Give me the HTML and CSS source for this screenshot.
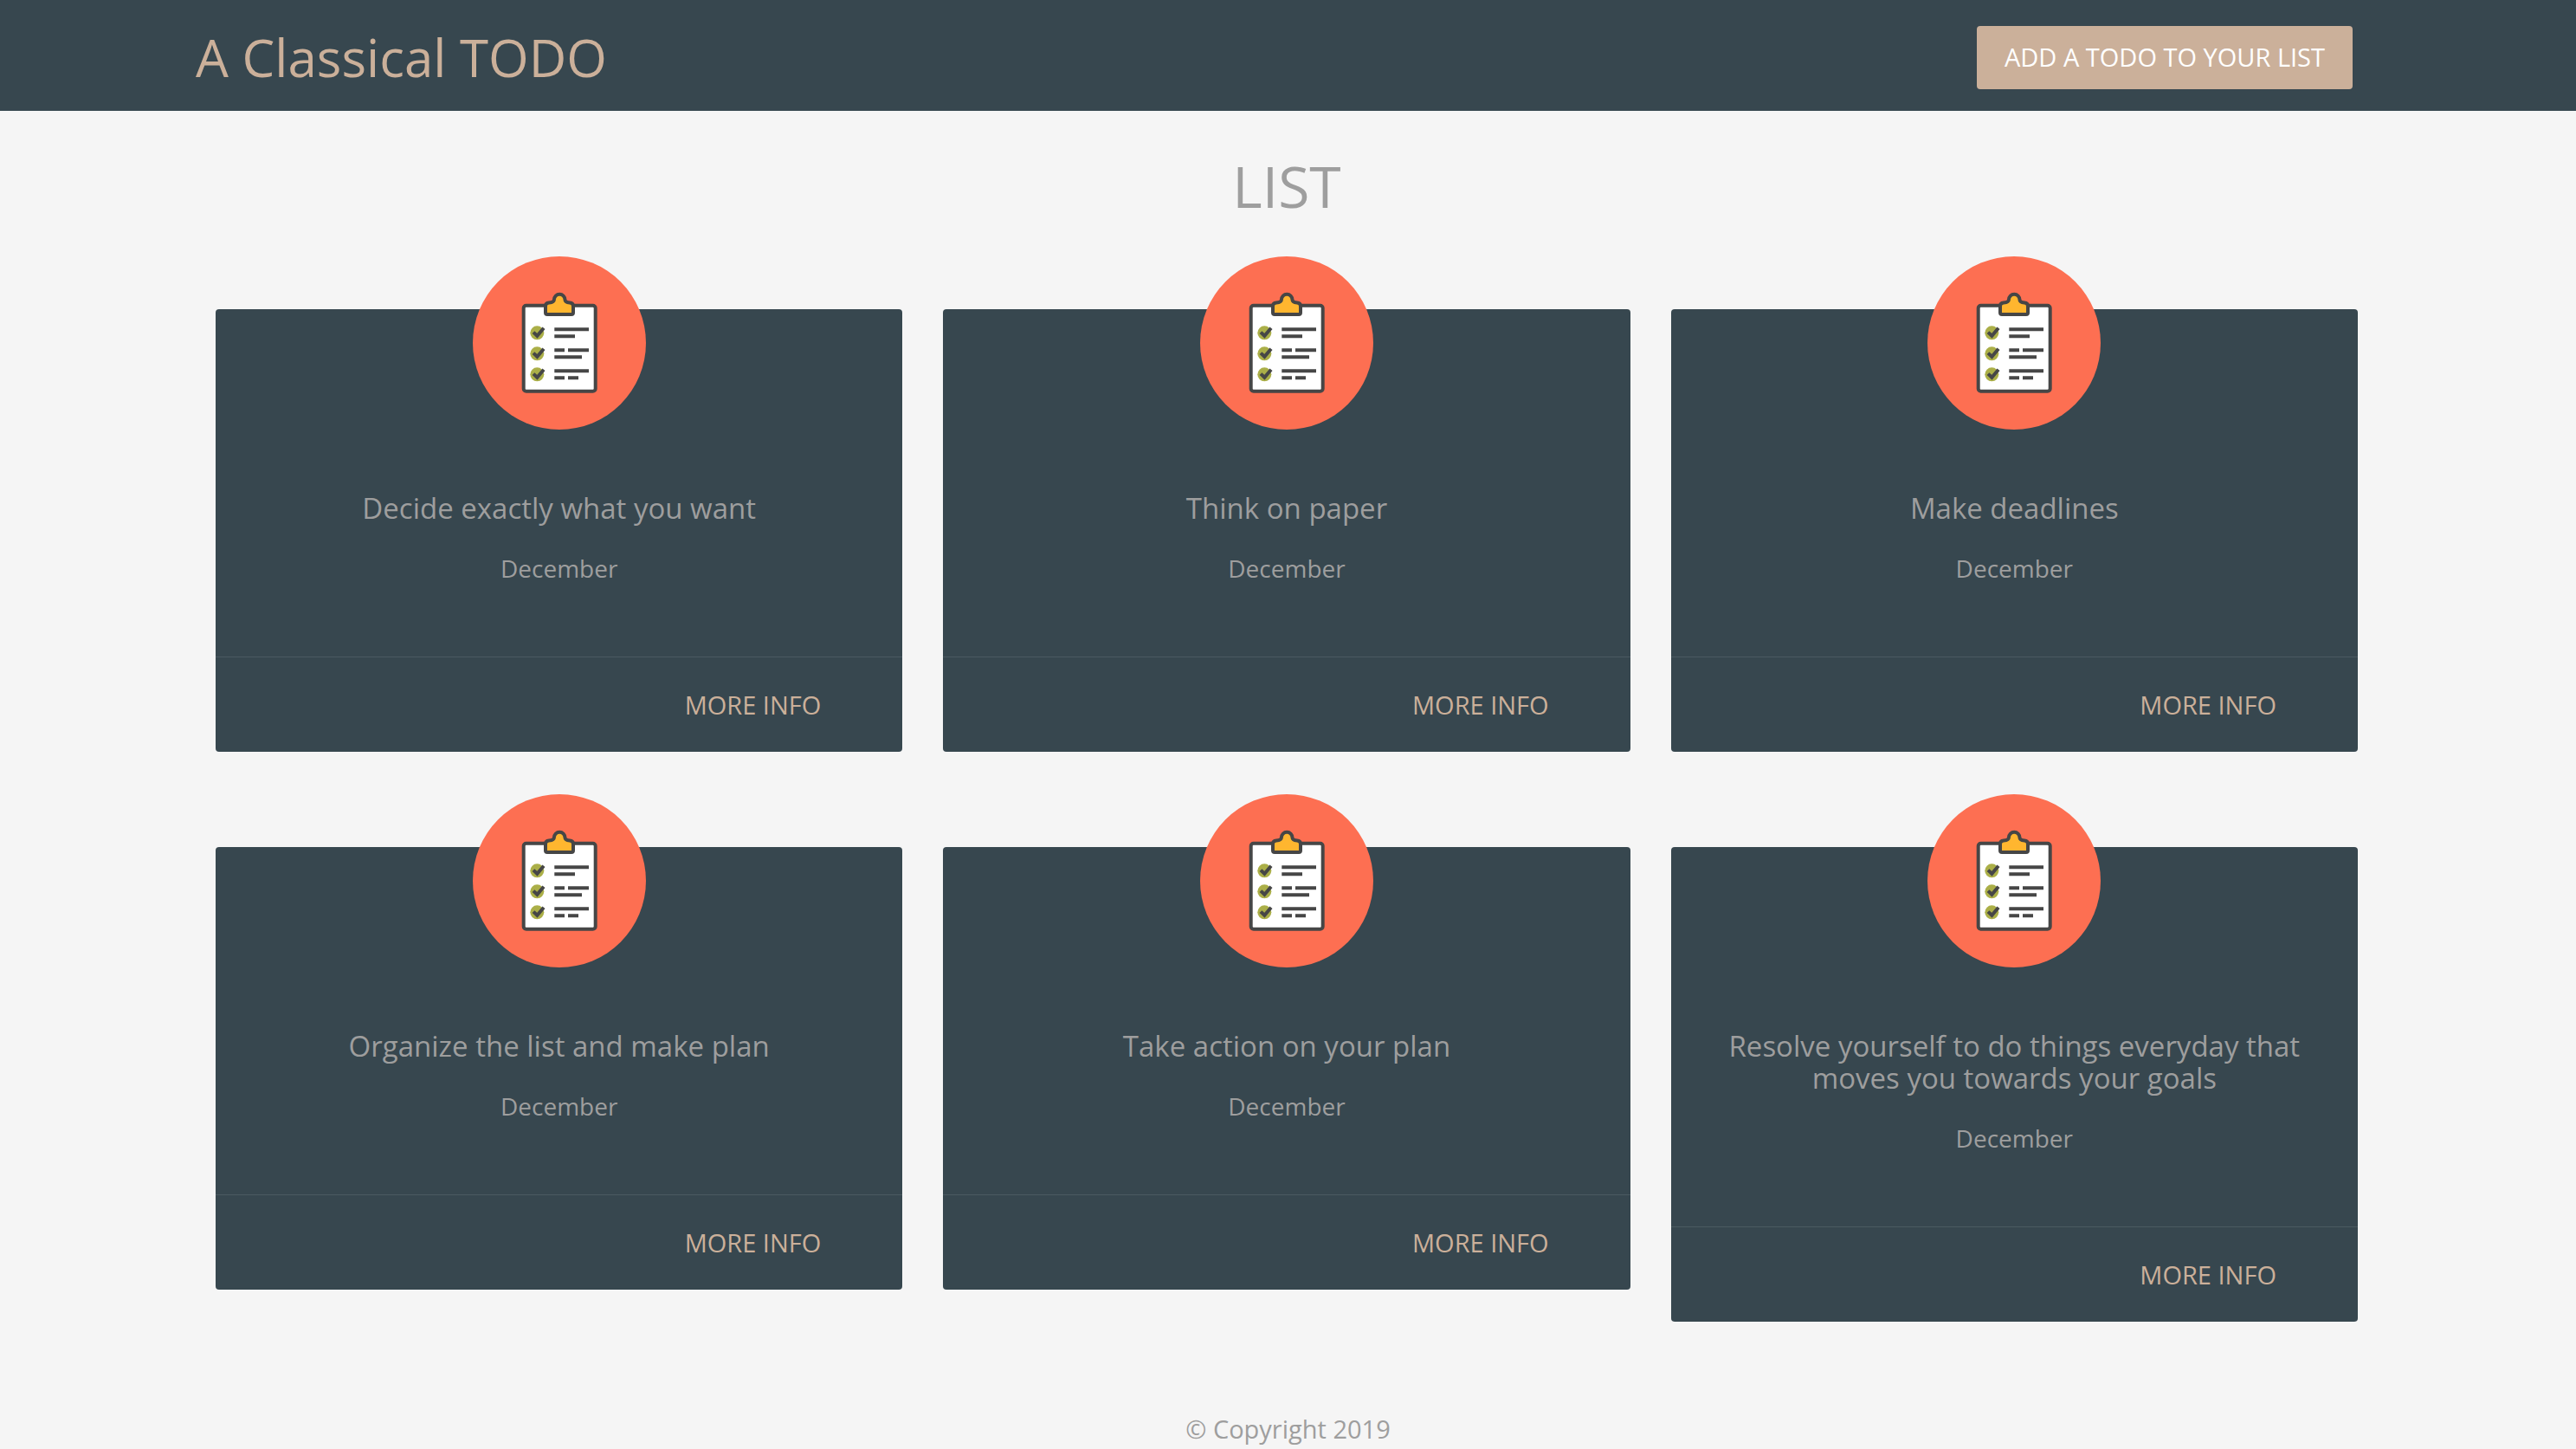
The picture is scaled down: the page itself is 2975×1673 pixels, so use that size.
FILE: index.html
```html
<!DOCTYPE html>
<html lang="en">
<head>
  <meta charset="utf-8">
  <meta name="viewport" content="width=device-width, initial-scale=1">
  <title>A Classical TODO</title>
  <link rel="stylesheet" href="styles.css">
</head>
<body>
  <svg class="sprite" aria-hidden="true">
    <symbol id="clipboard" viewBox="0 0 200 200">
      <circle cx="100" cy="100" r="100" fill="#fd6f52"/>
      <rect x="58.7" y="56.7" width="83" height="99" rx="3" fill="#fff" stroke="#464646" stroke-width="4"/>
      <path d="M84 57.500Q84 54 88 53.600Q93.900 53 93.900 50A6.300 6.300 0 0 1 106.500 50Q106.500 53 112 53.600Q116 54 116 57.500V65Q116 67 114 67H86Q84 67 84 65Z" fill="#ffb62f" stroke="#464646" stroke-width="4" stroke-linejoin="round"/>
      <g fill="#abaf48">
        <circle cx="74.300" cy="88.300" r="8"/>
        <circle cx="74.300" cy="112.300" r="8"/>
        <circle cx="74.300" cy="136.300" r="8"/>
      </g>
      <path d="M70 87.600L74.400 91.800L82 82.800M70 111.600L74.400 115.800L82 106.800M70 135.600L74.400 139.800L82 130.800" fill="none" stroke="#464646" stroke-width="4"/>
      <path d="M94.300 84.300H134M94.300 92.300H118M94.300 108.300H106M110 108.300H134M94.300 116.300H126M94.300 132.300H134M94.300 140.300H106M110 140.300H122" fill="none" stroke="#464646" stroke-width="4"/>
    </symbol>
  </svg>

  <header class="nav">
    <h1 class="brand">A Classical TODO</h1>
    <button class="add" type="button">Add a todo to your list</button>
  </header>

  <main class="content">
    <h2 class="heading">LIST</h2>
    <div class="grid">
      <article class="card">
        <svg class="icon" aria-hidden="true"><use href="#clipboard"/></svg>
        <div class="body">
          <h3 class="title">Decide exactly what you want</h3>
          <p class="month">December</p>
        </div>
        <div class="action"><a class="more" href="#">More info</a></div>
      </article>
      <article class="card">
        <svg class="icon" aria-hidden="true"><use href="#clipboard"/></svg>
        <div class="body">
          <h3 class="title">Think on paper</h3>
          <p class="month">December</p>
        </div>
        <div class="action"><a class="more" href="#">More info</a></div>
      </article>
      <article class="card">
        <svg class="icon" aria-hidden="true"><use href="#clipboard"/></svg>
        <div class="body">
          <h3 class="title">Make deadlines</h3>
          <p class="month">December</p>
        </div>
        <div class="action"><a class="more" href="#">More info</a></div>
      </article>
      <article class="card">
        <svg class="icon" aria-hidden="true"><use href="#clipboard"/></svg>
        <div class="body">
          <h3 class="title">Organize the list and make plan</h3>
          <p class="month">December</p>
        </div>
        <div class="action"><a class="more" href="#">More info</a></div>
      </article>
      <article class="card">
        <svg class="icon" aria-hidden="true"><use href="#clipboard"/></svg>
        <div class="body">
          <h3 class="title">Take action on your plan</h3>
          <p class="month">December</p>
        </div>
        <div class="action"><a class="more" href="#">More info</a></div>
      </article>
      <article class="card">
        <svg class="icon" aria-hidden="true"><use href="#clipboard"/></svg>
        <div class="body">
          <h3 class="title">Resolve yourself to do things everyday that moves you towards your goals</h3>
          <p class="month">December</p>
        </div>
        <div class="action"><a class="more" href="#">More info</a></div>
      </article>
    </div>
  </main>

  <footer class="footer">© Copyright 2019</footer>
</body>
</html>
```
FILE: styles.css
```css
* {
  box-sizing: border-box;
}

body {
  margin: 0;
  background: #f5f5f5;
  color: #9e9e9e;
  font-family: "Segoe UI", "Open Sans", "Noto Sans", sans-serif;
  font-size: 29px;
  line-height: 44px;
}

h1,
h2,
h3,
p {
  margin: 0;
  font-weight: 400;
}

.sprite {
  display: none;
}

.nav {
  display: flex;
  align-items: center;
  justify-content: space-between;
  min-height: 128px;
  padding: 4px 258px 0 226px;
  background: #37474f;
}

.brand {
  color: #cbb09a;
  font-size: 60px;
  line-height: 80px;
}

.add {
  height: 73px;
  padding: 0 32px;
  border: 0;
  border-radius: 4px;
  background: #cbb09a;
  color: #fff;
  font: inherit;
  text-transform: uppercase;
}

.content {
  padding: 46px 252px 0 249px;
}

.heading {
  font-size: 66px;
  line-height: 80px;
  text-align: center;
}

.grid {
  display: grid;
  grid-template-columns: repeat(3, minmax(0, 1fr));
  align-items: start;
  gap: 49px 47px;
  padding-top: 42px;
}

.card {
  display: flex;
  flex-direction: column;
  margin-top: 61px;
  border-radius: 4px;
  background: #37474f;
}

.icon {
  align-self: center;
  width: 200px;
  height: 200px;
  margin-top: -61px;
}

.body {
  padding: 72px 48px 80px;
  text-align: center;
}

.title {
  font-size: 33px;
  line-height: 37px;
}

.month {
  margin-top: 29px;
  font-size: 28px;
}

.action {
  display: flex;
  justify-content: flex-end;
  padding: 33px 94px 32px;
  border-top: 1px solid #4b5a61;
}

.more {
  color: #cbb09a;
  text-decoration: none;
  text-transform: uppercase;
}

.footer {
  padding-top: 102px;
  text-align: center;
}
```
